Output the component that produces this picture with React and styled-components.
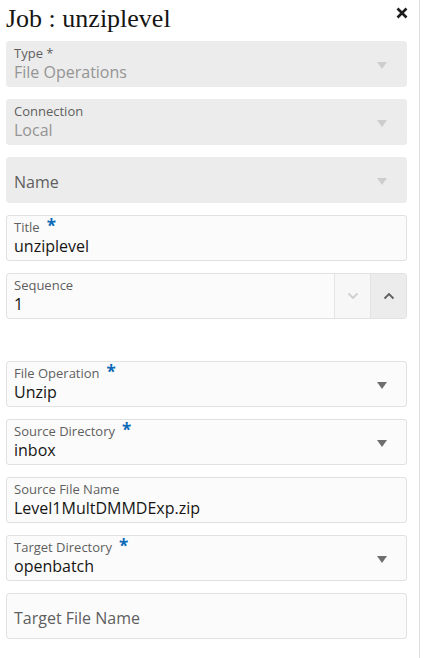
import React from "react";
import styled, { createGlobalStyle } from "styled-components";

const Global = createGlobalStyle`
  html, body { margin: 0; padding: 0; background: #fff; }
  body { font-family: "Open Sans", "Noto Sans", sans-serif; }
`;

const Panel = styled.div`
  width: 420px;
  height: 658px;
  box-sizing: border-box;
  border-right: 1px solid #dedede;
  padding: 0 12px 0 6px;
  display: flex;
  flex-direction: column;
`;

const Header = styled.div`
  display: flex;
  justify-content: space-between;
  align-items: flex-start;
  height: 41px;
`;

const Heading = styled.h1`
  margin: 0;
  padding-top: 4px;
  font-family: "Liberation Serif", "Times New Roman", serif;
  font-weight: normal;
  font-size: 26px;
  line-height: 30px;
  color: #161513;
`;

const Close = styled.button`
  border: none;
  background: none;
  padding: 0;
  margin: 7px -1px 0 0;
  width: 12px;
  height: 12px;
  display: flex;
`;

const Fields = styled.div`
  display: flex;
  flex-direction: column;
  gap: 12px;
`;

const Field = styled.div`
  position: relative;
  height: 46px;
  box-sizing: border-box;
  border-radius: 3px;
  display: flex;
  align-items: stretch;
  background: ${(p) => (p.$disabled ? "#ececec" : "#fbfbfb")};
  border: 1px solid ${(p) => (p.$disabled ? "#ececec" : "#e1e1e1")};
  margin-top: ${(p) => p.$gapTop || 0}px;
`;

const Body = styled.div`
  flex: 1;
  display: flex;
  flex-direction: column;
  justify-content: ${(p) => (p.$center ? "center" : "flex-start")};
  padding: 3px 7px 0;
`;

const Label = styled.div`
  font-size: 13px;
  line-height: 17px;
  color: #5f5f5f;
  display: flex;
  align-items: flex-start;
`;

const Req = styled.span`
  color: #0a6ab8;
  font-size: 17px;
  line-height: 14px;
  font-weight: bold;
  margin-left: 7px;
`;

const Value = styled.div`
  font-size: 16px;
  line-height: 20px;
  color: ${(p) => (p.$disabled ? "#949494" : "#161513")};
`;

const Placeholder = styled.div`
  font-size: 16px;
  line-height: 20px;
  color: #5f5f5f;
`;

const Arrow = styled.div`
  width: 44px;
  display: flex;
  align-items: center;
  justify-content: center;
  padding-right: 2px;
  &::after {
    content: "";
    border-left: 5.5px solid transparent;
    border-right: 5.5px solid transparent;
    border-top: 7px solid ${(p) => (p.$disabled ? "#cdcdcd" : "#6e6e6e")};
    margin-top: 2px;
  }
`;

const Step = styled.div`
  width: 35px;
  border-left: 1px solid #e4e4e4;
  display: flex;
  align-items: center;
  justify-content: center;
  background: ${(p) => (p.$active ? "#ececec" : "#f7f7f7")};
  border-radius: ${(p) => (p.$last ? "0 3px 3px 0" : "0")};
`;

const Chevron = ({ up, color }) => (
  <svg width="12" height="8" viewBox="0 0 12 8">
    <path
      d={up ? "M1.5 6.5 L6 2 L10.5 6.5" : "M1.5 1.5 L6 6 L10.5 1.5"}
      fill="none"
      stroke={color}
      strokeWidth="1.8"
    />
  </svg>
);

const Select = ({ label, value, required, disabled, gapTop }) => (
  <Field $disabled={disabled} $gapTop={gapTop}>
    <Body>
      <Label>
        {label}
        {required && <Req>*</Req>}
      </Label>
      <Value $disabled={disabled}>{value}</Value>
    </Body>
    <Arrow $disabled={disabled} />
  </Field>
);

const Input = ({ label, value, required }) => (
  <Field>
    <Body>
      <Label>
        {label}
        {required && <Req>*</Req>}
      </Label>
      <Value>{value}</Value>
    </Body>
  </Field>
);

export default function App() {
  return (
    <>
      <Global />
      <Panel>
        <Header>
          <Heading>Job : unziplevel</Heading>
          <Close aria-label="close">
            <svg width="12" height="12" viewBox="0 0 12 12">
              <path d="M1.5 1.5 L10.5 10.5 M10.5 1.5 L1.5 10.5" stroke="#1d1d1d" strokeWidth="2.6" />
            </svg>
          </Close>
        </Header>
        <Fields>
          <Select label="Type *" value="File Operations" disabled />
          <Select label="Connection" value="Local" disabled />
          <Field $disabled>
            <Body $center>
              <Placeholder>Name</Placeholder>
            </Body>
            <Arrow $disabled />
          </Field>
          <Input label="Title" value="unziplevel" required />
          <Field>
            <Body>
              <Label>Sequence</Label>
              <Value>1</Value>
            </Body>
            <Step>
              <Chevron color="#cfcfcf" />
            </Step>
            <Step $active $last>
              <Chevron up color="#5f5f5f" />
            </Step>
          </Field>
          <Select label="File Operation" value="Unzip" required gapTop={30} />
          <Select label="Source Directory" value="inbox" required />
          <Input label="Source File Name" value="Level1MultDMMDExp.zip" />
          <Select label="Target Directory" value="openbatch" required />
          <Field>
            <Body $center>
              <Placeholder>Target File Name</Placeholder>
            </Body>
          </Field>
        </Fields>
      </Panel>
    </>
  );
}
